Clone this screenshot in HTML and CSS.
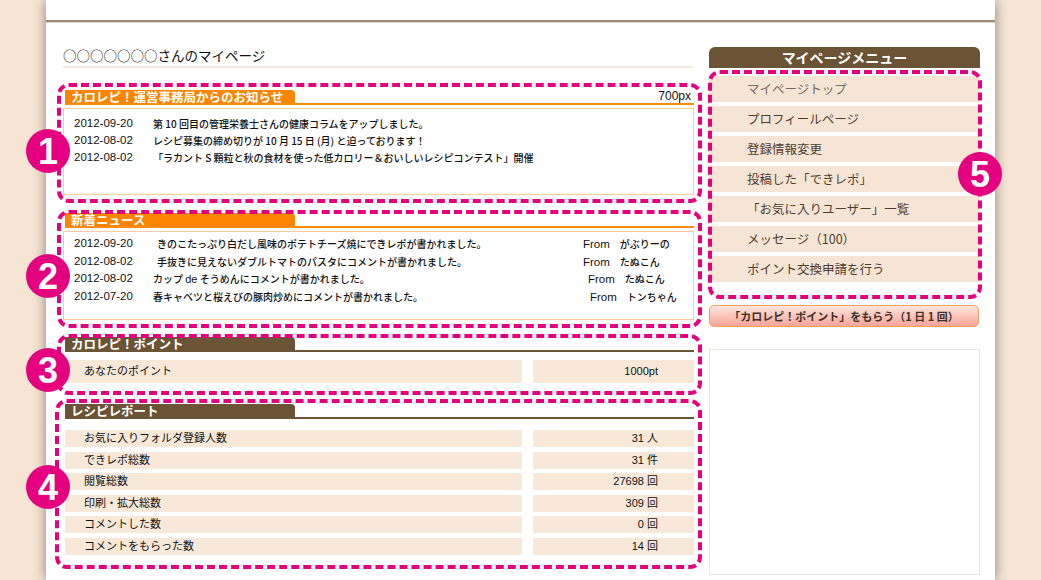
FILE: index.html
```html
<!DOCTYPE html>
<html lang="ja">
<head>
<meta charset="utf-8">
<title>マイページ</title>
<link rel="stylesheet" href="styles.css">
</head>
<body>
<div class="page">
  <div class="topbar"></div>
  <div class="content">
    <div class="main">
      <h1 class="title">○○○○○○○さんのマイページ</h1>

      <section class="sec sec1">
        <div class="num">1</div>
        <div class="head head-orange">
          <div class="tab tab-orange">カロレピ！運営事務局からのお知らせ</div>
          <div class="size">700px</div>
        </div>
        <div class="box box1">
          <div class="row"><span class="d">2012-09-20</span><span class="t">第 10 回目の管理栄養士さんの健康コラムをアップしました。</span></div>
          <div class="row"><span class="d">2012-08-02</span><span class="t">レシピ募集の締め切りが 10 月 15 日 (月) と迫っております！</span></div>
          <div class="row"><span class="d">2012-08-02</span><span class="t">「ラカント S 顆粒と秋の食材を使った低カロリー＆おいしいレシピコンテスト」開催</span></div>
        </div>
      </section>

      <section class="sec sec2">
        <div class="num">2</div>
        <div class="head head-orange">
          <div class="tab tab-orange">新着ニュース</div>
        </div>
        <div class="box box2">
          <div class="nrow"><span class="d">2012-09-20</span><span class="t ind">きのこたっぷり白だし風味のポテトチーズ焼にできレポが書かれました。</span><span class="from"><span class="f">From</span>がぶりーの</span></div>
          <div class="nrow"><span class="d">2012-08-02</span><span class="t ind">手抜きに見えないダブルトマトのパスタにコメントが書かれました。</span><span class="from"><span class="f">From</span>たぬこん</span></div>
          <div class="nrow"><span class="d">2012-08-02</span><span class="t">カップ <span class="lat">de</span> そうめんにコメントが書かれました。</span><span class="from off1"><span class="f">From</span>たぬこん</span></div>
          <div class="nrow"><span class="d">2012-07-20</span><span class="t">春キャベツと桜えびの豚肉炒めにコメントが書かれました。</span><span class="from off2"><span class="f">From</span>トンちゃん</span></div>
        </div>
      </section>

      <section class="sec sec3">
        <div class="num">3</div>
        <div class="head head-brown">
          <div class="tab tab-brown">カロレピ！ポイント</div>
        </div>
        <div class="kv kv-big">
          <div class="k">あなたのポイント</div>
          <div class="v">1000pt</div>
        </div>
      </section>

      <section class="sec sec4">
        <div class="num">4</div>
        <div class="head head-brown">
          <div class="tab tab-brown">レシピレポート</div>
        </div>
        <div class="kv-list">
          <div class="kv"><div class="k">お気に入りフォルダ登録人数</div><div class="v">31 人</div></div>
          <div class="kv"><div class="k">できレポ総数</div><div class="v">31 件</div></div>
          <div class="kv"><div class="k">閲覧総数</div><div class="v">27698 回</div></div>
          <div class="kv"><div class="k">印刷・拡大総数</div><div class="v">309 回</div></div>
          <div class="kv"><div class="k">コメントした数</div><div class="v">0 回</div></div>
          <div class="kv"><div class="k">コメントをもらった数</div><div class="v">14 回</div></div>
        </div>
      </section>
    </div>

    <aside class="side">
      <div class="side-head">マイページメニュー</div>
      <nav class="menu">
        <div class="num num5">5</div>
        <a class="item item-light">マイページトップ</a>
        <a class="item">プロフィールページ</a>
        <a class="item">登録情報変更</a>
        <a class="item">投稿した「できレポ」</a>
        <a class="item">「お気に入りユーザー」一覧</a>
        <a class="item">メッセージ（100）</a>
        <a class="item">ポイント交換申請を行う</a>
      </nav>
      <div class="btn">「カロレピ！ポイント」をもらう（1 日 1 回）</div>
      <div class="empty"></div>
    </aside>
  </div>
</div>
</body>
</html>
```

FILE: styles.css
```css
* { box-sizing: border-box; }

body {
  margin: 0;
  background: #f6e5d3;
  font-family: "Liberation Sans", "Noto Sans CJK JP", sans-serif;
  color: #111;
}

.page {
  width: 949px;
  margin: 0 auto;
  min-height: 100vh;
  background: #fff;
  box-shadow: 0 0 12px rgba(0, 0, 0, 0.45);
}

.topbar {
  height: 22px;
  border-bottom: 2px solid #9d8a77;
  box-shadow: 0 1px 0 #dcd2c8;
}

.content {
  display: flex;
  gap: 15px;
  padding: 0 15px 0 17px;
}

.main { width: 631px; }

.title {
  margin: 23px 0 0;
  height: 23px;
  line-height: 21px;
  font-size: 13.5px;
  font-weight: normal;
  font-family: "Noto Sans CJK JP", sans-serif;
  color: #111;
  border-bottom: 2px solid #f7eadc;
}

/* sections */
.sec { position: relative; }
.sec::before {
  content: "";
  position: absolute;
  border: 4px dashed #e5007f;
  border-radius: 12px;
  z-index: 1;
  pointer-events: none;
}
.sec1 { margin-top: 22px; }
.sec1::before { top: -7px; bottom: -8px; left: -6px; right: -8px; }
.sec2 { margin-top: 18px; }
.sec2::before { top: -3px; bottom: -8px; left: -6px; right: -8px; }
.sec3 { margin-top: 17px; }
.sec3::before { top: -3px; bottom: -12px; left: -6px; right: -8px; }
.sec4 { margin-top: 21px; }
.sec4::before { top: -5px; bottom: -14px; left: -8px; right: -8px; }

.num {
  position: absolute;
  width: 44px;
  height: 44px;
  border-radius: 50%;
  background: #e5007f;
  color: #fff;
  font: bold 36px/45px "Liberation Sans", sans-serif;
  text-align: center;
  z-index: 2;
  left: -37px;
}
.sec1 .num { top: 39px; }
.sec2 .num { top: 41px; }
.sec3 .num { top: 11px; }
.sec4 .num { top: 61px; }

.head {
  display: flex;
  justify-content: space-between;
  align-items: flex-end;
  margin-left: 2px;
}
.head-orange { border-bottom: 2px solid #fb8a10; }
.head-brown { border-bottom: 2px solid #6b5537; }

.tab {
  width: 230px;
  height: 13px;
  line-height: 14px;
  padding-left: 6px;
  font-size: 12.5px;
  font-weight: bold;
  color: #fff;
  border-radius: 0 4px 0 0;
  font-family: "Noto Sans CJK JP", sans-serif;
}
.tab-orange { background: #fb8500; }
.tab-brown { background: #6b5335; }

.size {
  font-size: 12px;
  line-height: 12px;
  padding-right: 3px;
  padding-bottom: 1px;
  color: #111;
}

.box {
  margin-top: 3px;
  border: 1px solid #f6cba0;
  padding: 6px 10px 0;
}
.box1 { height: 87px; }
.box2 { height: 89px; padding-top: 3px; }

.row {
  display: flex;
  height: 17px;
  line-height: 17px;
  font-size: 10px;
  font-weight: 500;
  font-family: "Noto Sans CJK JP", sans-serif;
}
.d {
  width: 79px;
  flex: none;
  font-family: "Liberation Sans", sans-serif;
  font-size: 11.5px;
  font-weight: normal;
}
.lat { font-family: "Liberation Sans", sans-serif; font-size: 11px; font-weight: normal; }

.nrow {
  display: flex;
  height: 17.5px;
  line-height: 17.5px;
  font-size: 10px;
  font-weight: 500;
  font-family: "Noto Sans CJK JP", sans-serif;
}
.nrow .t { width: 430px; flex: none; }
.nrow .t.ind { padding-left: 4px; }
.from { white-space: nowrap; }
.from .f {
  font-family: "Liberation Sans", sans-serif;
  font-size: 11.5px;
  font-weight: normal;
  margin-right: 10px;
}
.off1 { padding-left: 5px; }
.off2 { padding-left: 7px; }

/* key/value rows */
.kv {
  display: flex;
  gap: 11px;
  margin-left: 2px;
  height: 17px;
  line-height: 17px;
  font-size: 11px;
  font-family: "Liberation Sans", "Noto Sans CJK JP", sans-serif;
}
.kv .k {
  flex: 1;
  background: #f7e8d8;
  padding-left: 19px;
}
.kv .v {
  width: 161px;
  flex: none;
  background: #f7e8d8;
  text-align: right;
  padding-right: 36px;
}
.kv-big {
  margin-top: 8px;
  height: 23px;
  line-height: 23px;
}
.kv-list {
  margin-top: 11px;
  display: flex;
  flex-direction: column;
  gap: 4.6px;
}

/* sidebar */
.side { width: 271px; margin-top: 25px; }

.side-head {
  height: 21px;
  line-height: 21px;
  background: #6b5335;
  border-radius: 6px 6px 0 0;
  color: #fff;
  text-align: center;
  font-size: 14px;
  font-weight: bold;
  font-family: "Noto Sans CJK JP", sans-serif;
}

.menu {
  position: relative;
  margin-top: 8px;
  display: flex;
  flex-direction: column;
  gap: 4px;
}
.menu::before {
  content: "";
  position: absolute;
  top: -6px;
  bottom: -17px;
  left: -1px;
  right: -2px;
  border: 4px dashed #e5007f;
  border-radius: 12px;
  z-index: 1;
}
.num5 { left: 249px; top: 76px; }

.item {
  display: block;
  height: 26px;
  line-height: 26px;
  background: #f6e5d4;
  padding-left: 38px;
  font-size: 12.5px;
  color: #4e3e30;
  font-family: "Noto Sans CJK JP", sans-serif;
}
.item-light { color: #776a5e; }

.btn {
  margin-top: 23px;
  width: 270px;
  height: 22px;
  line-height: 20px;
  border: 1px solid #f2a066;
  border-radius: 5px;
  background: linear-gradient(#fde6df, #f6a497);
  text-align: center;
  font-size: 11px;
  font-weight: bold;
  color: #3e3028;
  font-family: "Noto Sans CJK JP", sans-serif;
}

.empty {
  margin-top: 22px;
  height: 226px;
  border: 1px solid #ece6dd;
}
```
